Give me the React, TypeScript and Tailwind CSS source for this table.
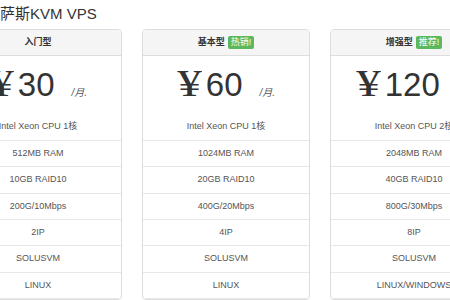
import React from "react";

type Plan = {
  name: string;
  badge: string;
  price: string;
  rows: string[];
};

const plans: Plan[] = [
  {
    name: "入门型",
    badge: "",
    price: "30",
    rows: ["Intel Xeon CPU 1核", "512MB RAM", "10GB RAID10", "200G/10Mbps", "2IP", "SOLUSVM", "LINUX"],
  },
  {
    name: "基本型",
    badge: "热销!",
    price: "60",
    rows: ["Intel Xeon CPU 1核", "1024MB RAM", "20GB RAID10", "400G/20Mbps", "4IP", "SOLUSVM", "LINUX"],
  },
  {
    name: "增强型",
    badge: "推荐!",
    price: "120",
    rows: ["Intel Xeon CPU 2核", "2048MB RAM", "40GB RAID10", "800G/30Mbps", "8IP", "SOLUSVM", "LINUX/WINDOWS"],
  },
];

const rowHeights = ["h-[27px]", "h-[26px]", "h-[27px]", "h-[26px]", "h-[26px]", "h-[27px]", "h-[26px]"];

const font = { fontFamily: '"Liberation Sans", Arial, "Noto Sans CJK SC", sans-serif' };

function Card({ plan }: { plan: Plan }) {
  return (
    <div className="w-[168px] shrink-0 border border-[#dddddd] rounded-[4px] bg-white overflow-hidden">
      <div className="h-[26px] bg-[#f5f5f5] border-b border-[#dddddd] flex items-center justify-center gap-[3px]">
        <span className="text-[9px] font-bold text-[#333333] leading-none">{plan.name}</span>
        {plan.badge && (
          <span className="bg-[#5cb85c] text-white text-[9px] leading-none px-[3px] py-[2px] rounded-[2px]">
            {plan.badge}
          </span>
        )}
      </div>
      <div className="h-[58px] pt-[11px] flex justify-center items-baseline text-[#333333]">
        <span
          className="text-[38px] leading-[32px] inline-block scale-x-[1.3] mr-[7px] ml-[3px]"
          style={{ fontFamily: '"Liberation Serif", "Times New Roman", serif' }}
        >
          ¥
        </span>
        <span className="text-[33px] leading-[32px]">{plan.price}</span>
        <span className="text-[10px] italic text-[#555555] ml-[17px]">/月.</span>
      </div>
      {plan.rows.map((r, i) => (
        <div
          key={i}
          className={`${rowHeights[i]} border-b border-[#e8e8e8] flex items-center justify-center text-[9px] text-[#555555]`}
        >
          {r}
        </div>
      ))}
    </div>
  );
}

export default function App() {
  return (
    <div className="w-[450px] h-[300px] overflow-hidden bg-white" style={font}>
      <div className="h-[29px] pt-[4px] text-[15px] leading-[20px] text-[#333333] whitespace-nowrap">
        萨斯KVM VPS
      </div>
      <div className="flex gap-[20px] ml-[-46px]">
        {plans.map((p) => (
          <Card key={p.name} plan={p} />
        ))}
      </div>
    </div>
  );
}
